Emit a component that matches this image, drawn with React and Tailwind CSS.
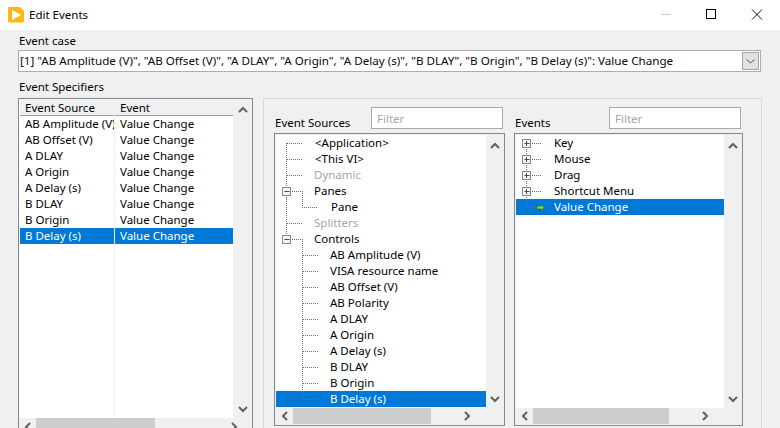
const font = { fontFamily: '"Noto Sans", sans-serif' };

function Chevron({ dir, className = "" }) {
  const paths = {
    up: "M1 6 L5 2 L9 6",
    down: "M1 2 L5 6 L9 2",
    left: "M6 1 L2 5 L6 9",
    right: "M2 1 L6 5 L2 9",
  };
  const vert = dir === "up" || dir === "down";
  return (
    <svg width={vert ? 10 : 8} height={vert ? 8 : 10} className={className}>
      <path d={paths[dir]} fill="none" stroke="#606060" strokeWidth="2" />
    </svg>
  );
}

function VScroll({ w }) {
  return (
    <div className={`${w} shrink-0 bg-[#f0f0f0] flex flex-col items-center justify-between pt-[7px] pb-[5px]`}>
      <Chevron dir="up" />
      <Chevron dir="down" />
    </div>
  );
}

function HScroll({ h, thumbW, right }) {
  return (
    <div className={`${h} shrink-0 bg-[#f0f0f0] flex items-start`}>
      <div className="w-[17px] h-full flex items-center justify-center shrink-0">
        <Chevron dir="left" />
      </div>
      <div className={`${thumbW} h-full bg-[#cdcdcd] shrink-0`} />
      <div className="flex-1" />
      <div className={`${right} h-full flex items-center justify-center shrink-0`}>
        <Chevron dir="right" />
      </div>
    </div>
  );
}

function Row({ children, pl, color = "text-black", selected }) {
  return (
    <div className={`h-4 leading-4 whitespace-nowrap ${pl} ${selected ? "bg-[#0078d7] text-white" : color}`}>
      {children}
    </div>
  );
}

function Box({ x, y, minus }) {
  return (
    <g>
      <rect x={x - 3.5} y={y - 3.5} width="8" height="8" fill="#f4f4f4" stroke="#8a8a8a" />
      <path d={`M${x - 1.5} ${y + 0.5} H${x + 3.5}`} stroke="#3c4a7a" />
      {!minus && <path d={`M${x + 0.5} ${y - 2} V${y + 3}`} stroke="#3c4a7a" />}
    </g>
  );
}

function Dots({ d }) {
  return <path d={d} fill="none" stroke="#707070" strokeDasharray="1 1" shapeRendering="crispEdges" />;
}

function SourcesTree() {
  const top = [
    ["<Application>", "pl-[39px]"],
    ["<This VI>", "pl-[39px]"],
    ["Dynamic", "pl-[38px]", "text-[#a6a6a6]"],
    ["Panes", "pl-[38px]"],
    ["Pane", "pl-[55px]"],
    ["Splitters", "pl-[38px]", "text-[#a6a6a6]"],
    ["Controls", "pl-[38px]"],
    ["AB Amplitude (V)", "pl-[54px]"],
    ["VISA resource name", "pl-[54px]"],
    ["AB Offset (V)", "pl-[54px]"],
    ["AB Polarity", "pl-[54px]"],
    ["A DLAY", "pl-[54px]"],
    ["A Origin", "pl-[54px]"],
    ["A Delay (s)", "pl-[54px]"],
    ["B DLAY", "pl-[54px]"],
    ["B Origin", "pl-[54px]"],
    ["B Delay (s)", "pl-[54px]"],
  ];
  const leaves = [255, 271, 287, 303, 319, 335, 351, 367, 383, 399].map((y) => y - 135);
  return (
    <div className="relative flex-1 bg-white min-h-0 pt-0">
      {top.map(([t, pl, c], i) => (
        <Row key={t} pl={pl} color={c} selected={i === 16}>
          {t}
        </Row>
      ))}
      <svg className="absolute left-0 top-0" width="210" height="273">
        <Dots d="M10.5 8 V104" />
        <Dots d="M10.5 8.5 H26 M10.5 24.5 H26 M10.5 40.5 H26 M10.5 88.5 H26" />
        <Dots d="M14 56.5 H26.5 V72.5 H41 M14 104.5 H26.5 V264" />
        {leaves.map((y) => (
          <Dots key={y} d={`M26.5 ${y + 0.5} H42`} />
        ))}
        <Box x={10} y={56} minus />
        <Box x={10} y={104} minus />
      </svg>
    </div>
  );
}

function EventsTree() {
  const rows = ["Key", "Mouse", "Drag", "Shortcut Menu", "Value Change"];
  return (
    <div className="relative flex-1 bg-white min-h-0">
      {rows.map((t, i) => (
        <Row key={t} pl="pl-[38px]" selected={i === 4}>
          {t}
        </Row>
      ))}
      <svg className="absolute left-0 top-0" width="40" height="80">
        <Dots d="M10.5 8 V72.5 H21" />
        <Dots d="M14 8.5 H25 M14 24.5 H25 M14 40.5 H25 M14 56.5 H25" />
        {[8, 24, 40, 56].map((y) => (
          <Box key={y} x={10} y={y} />
        ))}
        <path d="M21 71 H25 V69.5 L28 72.5 L25 75.5 V74 H21 Z" fill="#6fe03a" stroke="#1c6b10" strokeWidth="0.6" />
      </svg>
    </div>
  );
}

const specifiers = [
  "AB Amplitude (V)",
  "AB Offset (V)",
  "A DLAY",
  "A Origin",
  "A Delay (s)",
  "B DLAY",
  "B Origin",
  "B Delay (s)",
];

function Filter({ w }) {
  return (
    <div className={`${w} h-[22px] border border-[#a9a9a9] bg-white px-[5px] leading-[22px] text-[#a6a6a6]`}>
      Filter
    </div>
  );
}

export default function App() {
  return (
    <div style={font} className="w-[780px] h-[428px] overflow-hidden bg-[#f0f0f0] text-[11.5px] text-black flex flex-col">
      <div className="h-[30px] bg-white flex items-center shrink-0">
        <svg width="17" height="16" className="ml-[8px]">
          <path d="M1 0 H12 L16 4 V14 a1.5 1.5 0 0 1 -1.5 1.5 H1.5 A1.5 1.5 0 0 1 0 14 V1 A1 1 0 0 1 1 0Z" fill="#fdb813" />
          <path d="M4 3 L13 8 L4 13 Z" fill="#ffffff" />
        </svg>
        <span className="ml-[4px] text-[11.5px]">Edit Events</span>
        <div className="flex-1" />
        <svg width="150" height="30">
          <path d="M31 14.5 H41" stroke="#c8c8c8" />
          <rect x="76.5" y="9.5" width="9" height="9" fill="none" stroke="#000" />
          <path d="M122 9.5 L132 19.5 M132 9.5 L122 19.5" stroke="#111" />
        </svg>
      </div>

      <div className="flex-1 min-h-0 pl-[18px] flex flex-col">
        <div className="h-4 mt-[3px] pl-[1px] leading-4">Event case</div>
        <div className="mt-[1px] w-[743px] h-[22px] border border-[#abadb3] bg-white flex items-center justify-between shrink-0">
          <span className="pl-[1px] text-[11.65px] text-[#0a0a0a] whitespace-nowrap">
            [1] "AB Amplitude (V)", "AB Offset (V)", "A DLAY", "A Origin", "A Delay (s)", "B DLAY", "B Origin", "B Delay (s)": Value Change
          </span>
          <div className="w-[17px] h-[18px] mr-[1px] border border-[#a6a6a6] bg-[#e1e1e1] flex items-center justify-center shrink-0">
            <svg width="9" height="5">
              <path d="M0.5 0.5 L4.5 4 L8.5 0.5" fill="none" stroke="#505050" />
            </svg>
          </div>
        </div>
        <div className="h-4 mt-[7px] pl-[1px] leading-4">Event Specifiers</div>

        <div className="flex mt-[3px] flex-1 min-h-0">
          <div className="w-[235px] shrink-0 h-[340px] border border-[#828790] bg-white flex flex-col">
            <div className="flex h-[319px] shrink-0 pl-[1px]">
              <div className="flex-1 flex flex-col min-w-0">
                <div className="flex h-[17px] bg-[#f0f0f0] shrink-0 pt-[1px] leading-[15px]">
                  <div className="w-[94px] border-b border-[#a0a0a0] pl-[5px] mr-[1px]">Event Source</div>
                  <div className="flex-1 border-b border-[#a0a0a0] pl-[5px]">Event</div>
                </div>
                <div className="relative flex-1">
                  {specifiers.map((s, i) => (
                    <div key={s} className={`flex h-4 leading-4 whitespace-nowrap ${i === 7 ? "bg-[#0078d7] text-white" : ""}`}>
                      <div className="w-[94px] pl-[5px] overflow-hidden shrink-0">{s}</div>
                      <div className="pl-[6px]">Value Change</div>
                    </div>
                  ))}
                  <div className="absolute left-[94px] top-0 bottom-0 w-px bg-[#f0f0f0]" />
                </div>
              </div>
              <VScroll w="w-[19px]" />
            </div>
            <HScroll h="h-[17px]" thumbW="w-[119px]" right="w-[37px]" />
          </div>

          <div className="ml-[10px] w-[499px] h-[340px] border border-b-0 border-[#d9d9d9] pl-[10px] flex gap-[9px]">
            <div className="w-[231px] shrink-0 flex flex-col">
              <div className="flex items-end justify-between h-[30px] pr-[2px] pt-[8px] shrink-0">
                <span className="pl-[1px] leading-4 -mb-[2px]">Event Sources</span>
                <Filter w="w-[132px]" />
              </div>
              <div className="mt-[4px] h-[293px] border border-[#828790] bg-[#f0f0f0] flex flex-col p-[1px] shrink-0">
                <div className="flex flex-1 min-h-0">
                  <SourcesTree />
                  <VScroll w="w-[17px]" />
                </div>
                <HScroll h="h-[16px]" thumbW="w-[138px]" right="w-[72px]" />
              </div>
            </div>
            <div className="w-[229px] shrink-0 flex flex-col">
              <div className="flex items-end justify-between h-[30px] pr-[2px] pt-[8px] shrink-0">
                <span className="pl-[1px] leading-4 -mb-[2px]">Events</span>
                <Filter w="w-[132px]" />
              </div>
              <div className="mt-[4px] h-[293px] border border-[#828790] bg-[#f0f0f0] flex flex-col p-[1px] shrink-0">
                <div className="flex flex-1 min-h-0">
                  <EventsTree />
                  <VScroll w="w-[17px]" />
                </div>
                <HScroll h="h-[16px]" thumbW="w-[136px]" right="w-[72px]" />
              </div>
            </div>
          </div>
        </div>
      </div>
    </div>
  );
}
